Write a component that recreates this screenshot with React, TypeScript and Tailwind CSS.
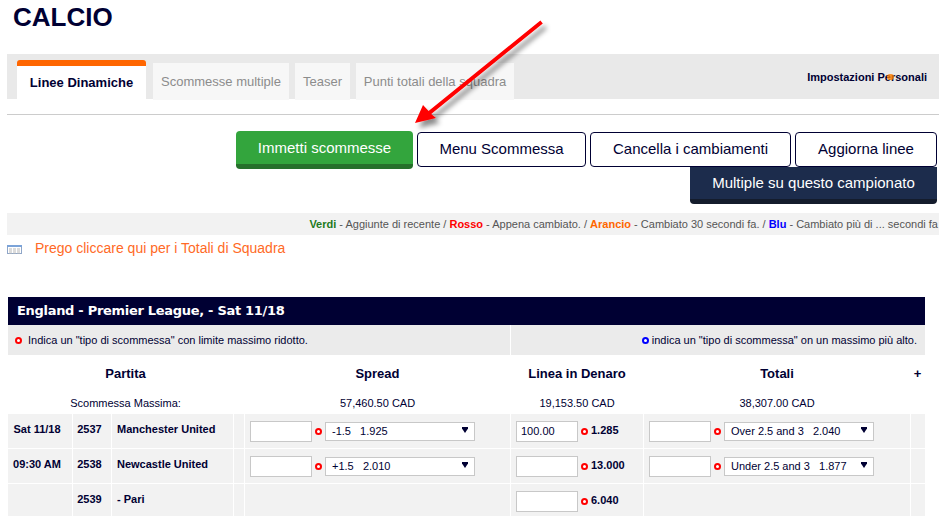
import React from 'react';

const sans = "font-['Liberation_Sans',Arial,sans-serif]";

function Dot({ blue = false }: { blue?: boolean }) {
  return (
    <span
      className={`inline-block w-[7px] h-[7px] shrink-0 rounded-full border-2 bg-white ${blue ? 'border-[#0000ff]' : 'border-[#ff0000]'}`}
    />
  );
}

function Stake({ value = '' }: { value?: string }) {
  return (
    <div className="w-[62px] h-[21px] shrink-0 bg-white border border-[#c8c8c8] pl-[4px] text-[11px] font-normal leading-[19px] text-[#000033]">
      {value}
    </div>
  );
}

function Pick({ width, label }: { width: string; label: string }) {
  return (
    <div className={`${width} h-[19px] shrink-0 bg-white border border-[#c8c8c8] pl-[6px] pr-[6px] flex items-center justify-between text-[11px] font-normal text-[#000033]`}>
      <span className="whitespace-pre">{label}</span>
      <svg width="6" height="6" viewBox="0 0 6 6" className="mb-[2px]">
        <path d="M0 0H6V1.500L3 6L0 1.500Z" fill="#000033" />
      </svg>
    </div>
  );
}

function Cell({ className = '', children }: { className?: string; children?: React.ReactNode }) {
  return <div className={`bg-[#f2f2f2] flex items-center text-[11px] font-bold text-[#000033] ${className}`}>{children}</div>;
}

const rows = [
  { time: 'Sat 11/18', num: '2537', team: 'Manchester United', spread: '-1.5   1.925', stake: '100.00', money: '1.285', total: 'Over 2.5 and 3   2.040' },
  { time: '09:30 AM', num: '2538', team: 'Newcastle United', spread: '+1.5   2.010', stake: '', money: '13.000', total: 'Under 2.5 and 3   1.877' },
  { time: '', num: '2539', team: '- Pari', spread: '', stake: '', money: '6.040', total: '' },
];

const tabs = [
  { label: 'Scommesse multiple', w: 'w-[136px]' },
  { label: 'Teaser', w: 'w-[55px]' },
  { label: 'Punti totali della squadra', w: 'w-[158px]' },
];

const outline = 'h-[35px] bg-white border border-[#000033] rounded-[4px] flex items-center justify-center text-[15px] text-[#000033]';
const cols = 'grid grid-cols-[64px_38px_121px_10px_265px_132px_266px_14px] gap-x-px';

export default function App() {
  return (
    <div className={`relative w-[939px] h-[516px] overflow-hidden bg-white ${sans}`}>
      <h1 className="pl-[13px] pt-[2px] h-[54px] text-[26px] leading-[30px] font-bold text-[#000033]">CALCIO</h1>

      <div className="ml-[7px] h-[45px] bg-[#e9e9e9] pl-[10px] pr-[12px] flex items-end justify-between">
        <div className="flex items-end">
          <div className="w-[129px] h-[40px] -mb-px bg-white rounded-t-[3px] border-t-[6px] border-[#ff6600] flex items-center justify-center text-[13px] font-bold text-[#000033]">
            Linee Dinamiche
          </div>
          <div className="flex gap-[6px] ml-[7px]">
            {tabs.map((t) => (
              <div key={t.label} className={`${t.w} h-[37px] -mb-px bg-[#f7f7f7] flex items-center justify-center text-[13px] text-[#8c8c8c]`}>
                {t.label}
              </div>
            ))}
          </div>
        </div>
        <div className="relative h-[45px] flex items-center text-[11px] font-bold text-[#000033] pt-[2px]">
          Impostazioni Personali
          <span className="absolute left-[80px] top-[20px] w-[7px] h-[6px] rounded-full bg-[#ff8000]/80" />
        </div>
      </div>

      <div className="ml-[7px] mt-[15px] h-px bg-[#cccccc]" />

      <div className="mt-[16px] flex justify-end gap-[4px] pr-[2px]">
        <div className="w-[177px] h-[38px] bg-[#33a53d] border-b-[5px] border-[#26702b] rounded-[4px] flex items-center justify-center text-[15px] text-white pt-[1px]">
          Immetti scommesse
        </div>
        <div className={`${outline} w-[169px] mt-px`}>Menu Scommessa</div>
        <div className={`${outline} w-[201px] mt-px`}>Cancella i cambiamenti</div>
        <div className={`${outline} w-[142px] mt-px`}>Aggiorna linee</div>
      </div>

      <div className="ml-[690px] -mt-[2px] w-[247px] h-[37px] bg-[#1c2c4c] border-b-[5px] border-[#141c2c] rounded-b-[4px] flex items-center justify-center text-[15px] text-white">
        Multiple su questo campionato
      </div>

      <div className="ml-[7px] mt-[9px] h-[22px] bg-[#f2f2f2] flex items-center justify-end overflow-hidden whitespace-nowrap text-[11px] text-[#555555]">
        <div className="shrink-0 mr-[1px]">
          <b className="text-[#1d7a1d]">Verdi</b> - Aggiunte di recente / <b className="text-[#ff0000]">Rosso</b> - Appena cambiato. / <b className="text-[#ff6600]">Arancio</b> - Cambiato 30 secondi fa. / <b className="text-[#0000ff]">Blu</b> - Cambiato più di ... secondi fa
        </div>
      </div>

      <div className="ml-[7px] mt-[5px] h-[17px] flex items-center">
        <svg width="15" height="9" viewBox="0 0 15 9" className="shrink-0 mt-[1px]">
          <rect x="0.500" y="0.500" width="14" height="8" fill="#ffffff" stroke="#8fa6c8" />
          <rect width="15" height="2" fill="#7ba3d8" />
          <path d="M2 4h3M6 4h3M10 4h3M2 6h3M6 6h3M10 6h3M2 8h3M6 8h3M10 8h3" stroke="#b8b8b8" strokeWidth="1" fill="none" />
        </svg>
        <span className="ml-[13px] text-[14px] text-[#ff6a26]">Prego cliccare qui per i Totali di Squadra</span>
      </div>

      <div className="ml-[8px] mt-[40px] w-[917px]">
        <div className="h-[28px] bg-[#000033] pl-[9px] flex items-center text-[13px] font-bold text-white font-['DejaVu_Sans',sans-serif] tracking-[-0.3px]">
          England - Premier League, - Sat 11/18
        </div>

        <div className="h-[30px] flex gap-x-px bg-white text-[11px] text-[#000033]">
          <div className="w-[502px] bg-[#ebebeb] pl-[7px] flex items-center gap-[6px]">
            <Dot />
            Indica un "tipo di scommessa" con limite massimo ridotto.
          </div>
          <div className="flex-1 bg-[#ebebeb] pr-[8px] flex items-center justify-end gap-[3px]">
            <Dot blue />
            indica un "tipo di scommessa" on un massimo più alto.
          </div>
        </div>

        <div className={`${cols} h-[37px] items-center text-[13px] font-bold text-[#000033]`}>
          <div className="col-span-3 text-center pl-[10px]">Partita</div>
          <div />
          <div className="text-center">Spread</div>
          <div className="text-center">Linea in Denaro</div>
          <div className="text-center">Totali</div>
          <div className="text-center -ml-[1px]">+</div>
        </div>

        <div className={`${cols} h-[22px] items-center text-[11px] text-[#000033]`}>
          <div className="col-span-3 text-center pl-[10px]">Scommessa Massima:</div>
          <div />
          <div className="text-center">57,460.50 CAD</div>
          <div className="text-center">19,153.50 CAD</div>
          <div className="text-center">38,307.00 CAD</div>
          <div />
        </div>

        <div className="flex flex-col gap-y-px">
          {rows.map((r) => (
            <div key={r.num} className={`${cols} h-[34px]`}>
              <Cell className="justify-center pb-[3px] pr-[6px]">{r.time}</Cell>
              <Cell className="justify-center pb-[3px] pr-[5px]">{r.num}</Cell>
              <Cell className="pl-[5px] pb-[3px]">{r.team}</Cell>
              <Cell />
              <Cell className="pl-[5px] gap-[3px]">
                {r.spread && (
                  <>
                    <Stake />
                    <Dot />
                    <Pick width="w-[150px]" label={r.spread} />
                  </>
                )}
              </Cell>
              <Cell className="pl-[5px] gap-[3px]">
                <Stake value={r.stake} />
                <Dot />
                <span className="pb-[1px]">{r.money}</span>
              </Cell>
              <Cell className="pl-[5px] gap-[3px]">
                {r.total && (
                  <>
                    <Stake />
                    <Dot />
                    <Pick width="w-[150px]" label={r.total} />
                  </>
                )}
              </Cell>
              <Cell />
            </div>
          ))}
        </div>
      </div>

      <svg className="absolute left-[400px] top-[10px] pointer-events-none" width="160" height="130" viewBox="400 10 160 130">
        <defs>
          <filter id="arrow-shadow" x="-20%" y="-20%" width="150%" height="150%">
            <feDropShadow dx="4" dy="5" stdDeviation="2.5" floodColor="#000" floodOpacity="0.45" />
          </filter>
        </defs>
        <g filter="url(#arrow-shadow)">
          <path d="M542.800 23.600 L540.400 20.400 L428.600 111 L423 105 L415 123 L436 118 L431.200 114 Z" fill="#ff0000" />
        </g>
      </svg>
    </div>
  );
}
